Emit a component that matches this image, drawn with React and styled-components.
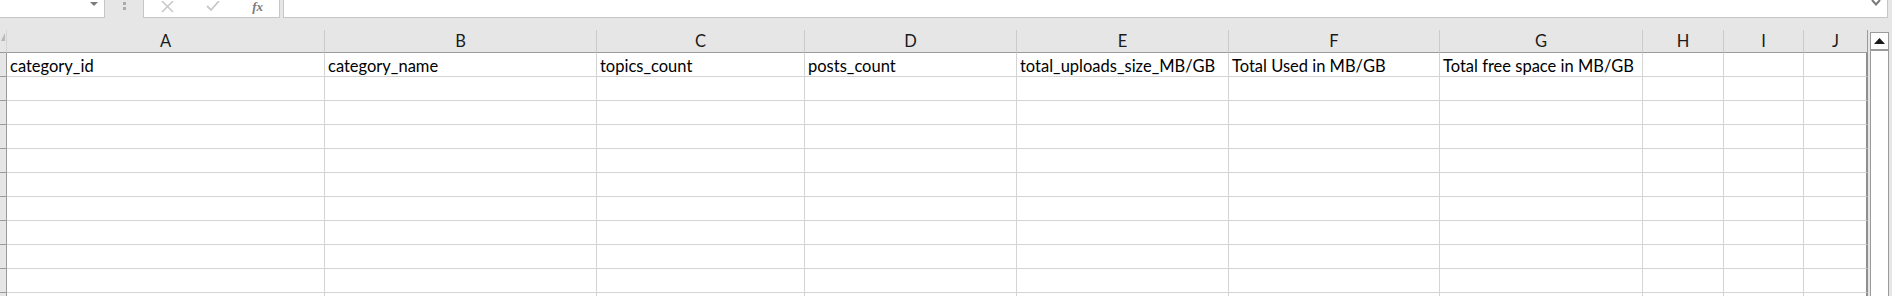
import React from "react";
import styled, { createGlobalStyle } from "styled-components";

const columns = [
  { name: "A", width: 318, title: "category_id" },
  { name: "B", width: 272, title: "category_name" },
  { name: "C", width: 208, title: "topics_count" },
  { name: "D", width: 212, title: "posts_count" },
  { name: "E", width: 212, title: "total_uploads_size_MB/GB" },
  { name: "F", width: 211, title: "Total Used in MB/GB" },
  { name: "G", width: 203, title: "Total free space in MB/GB" },
  { name: "H", width: 81, title: "" },
  { name: "I", width: 80, title: "" },
  { name: "J", width: 64, title: "" },
];

const emptyRows = 10;

function App() {
  const template = `7px ${columns.map((c) => c.width + "px").join(" ")}`;
  return (
    <>
      <GlobalStyle />
      <Window>
        <FormulaBar>
          <NameBox>
            <Caret />
          </NameBox>
          <Grip>
            <Dot />
            <Dot />
          </Grip>
          <ButtonBox>
            <svg width="13" height="12" viewBox="0 0 13 12">
              <path d="M1 0 L12 11 M12 0 L1 11" stroke="#c9c9c9" strokeWidth="1.6" fill="none" />
            </svg>
            <svg width="14" height="11" viewBox="0 0 14 11">
              <path d="M1 5 L5 9 L13 0" stroke="#c9c9c9" strokeWidth="1.8" fill="none" />
            </svg>
            <Fx>fx</Fx>
          </ButtonBox>
          <FormulaInput>
            <svg width="10" height="7" viewBox="0 0 10 7">
              <path d="M1 0 L5 4.5 L9 0" stroke="#7a7a7a" strokeWidth="2" fill="none" />
            </svg>
          </FormulaInput>
        </FormulaBar>
        <SheetArea>
          <Grid style={{ gridTemplateColumns: template }}>
            <Corner>
              <CornerTri />
            </Corner>
            {columns.map((c, i) => (
              <ColHeader key={c.name} $last={i === columns.length - 1}>
                {c.name}
              </ColHeader>
            ))}
            <RowHeader />
            {columns.map((c, i) => (
              <Cell key={c.name} $last={i === columns.length - 1}>
                {c.title}
              </Cell>
            ))}
            {Array.from({ length: emptyRows }).map((_, r) => (
              <React.Fragment key={r}>
                <RowHeader />
                {columns.map((c, i) => (
                  <Cell key={c.name} $last={i === columns.length - 1} />
                ))}
              </React.Fragment>
            ))}
          </Grid>
          <ScrollTrack>
            <ScrollBox>
              <UpButton>
                <svg width="11" height="6" viewBox="0 0 11 6">
                  <path d="M0 6 L5.5 0 L11 6 Z" fill="#1a1a1a" />
                </svg>
              </UpButton>
            </ScrollBox>
          </ScrollTrack>
        </SheetArea>
      </Window>
    </>
  );
}

export default App;

const GlobalStyle = createGlobalStyle`
  html, body {
    margin: 0;
    padding: 0;
    background: #e6e6e6;
    overflow: hidden;
  }
`;

const Window = styled.div`
  width: 1892px;
  height: 296px;
  background: #e6e6e6;
  font-family: Lato, "Open Sans", "Liberation Sans", sans-serif;
  overflow: hidden;
`;

const FormulaBar = styled.div`
  display: flex;
  height: 18px;
  align-items: stretch;
  margin-bottom: 12px;
`;

const NameBox = styled.div`
  position: relative;
  width: 105px;
  background: #fff;
  border-right: 1px solid #c6c6c6;
  border-bottom: 1px solid #c6c6c6;
  box-sizing: border-box;
`;

const Caret = styled.div`
  position: absolute;
  left: 90px;
  top: 2px;
  width: 0;
  height: 0;
  border-left: 4px solid transparent;
  border-right: 4px solid transparent;
  border-top: 4px solid #7a7a7a;
`;

const Grip = styled.div`
  width: 38px;
  display: flex;
  flex-direction: column;
  align-items: center;
  gap: 2px;
  padding-top: 2px;
  box-sizing: border-box;
`;

const Dot = styled.span`
  width: 3px;
  height: 3px;
  background: #ababab;
`;

const ButtonBox = styled.div`
  width: 137px;
  display: flex;
  align-items: flex-start;
  padding: 0 16px 0 17px;
  justify-content: space-between;
  background: #fff;
  border: 1px solid #c6c6c6;
  border-top: none;
  box-sizing: border-box;
  svg {
    margin-top: 1px;
  }
`;

const Fx = styled.span`
  font-family: "Liberation Serif", serif;
  font-style: italic;
  font-weight: bold;
  font-size: 13px;
  line-height: 13px;
  color: #7a7a7a;
`;

const FormulaInput = styled.div`
  margin-left: 3px;
  width: 1605px;
  display: flex;
  justify-content: flex-end;
  padding-right: 6px;
  background: #fff;
  border: 1px solid #c6c6c6;
  border-top: none;
  box-sizing: border-box;
`;

const SheetArea = styled.div`
  display: flex;
  align-items: flex-start;
`;

const Grid = styled.div`
  display: grid;
  grid-auto-rows: 24px;
  grid-template-rows: 23px;
`;

const Corner = styled.div`
  position: relative;
  background: #e6e6e6;
  border-right: 1px solid #d4d4d4;
  border-bottom: 1px solid #9b9b9b;
`;

const CornerTri = styled.div`
  position: absolute;
  right: 1px;
  top: 3px;
  width: 0;
  height: 0;
  border-left: 4px solid transparent;
  border-bottom: 8px solid #b8b8b8;
`;

const ColHeader = styled.div`
  background: #e6e6e6;
  border-right: 1px solid ${(p) => (p.$last ? "#9b9b9b" : "#cbcbcb")};
  border-bottom: 1px solid #9b9b9b;
  text-align: center;
  font-size: 16.5px;
  line-height: 22px;
  color: #1b1b1b;
`;

const RowHeader = styled.div`
  background: #e6e6e6;
  border-right: 1px solid #9b9b9b;
  border-bottom: 1px solid #9b9b9b;
`;

const Cell = styled.div`
  background: #fff;
  border-right: ${(p) => (p.$last ? "2px solid #8f8f8f" : "1px solid #d4d4d4")};
  border-bottom: 1px solid #d4d4d4;
  padding: 3px 0 0 3px;
  box-sizing: border-box;
  font-size: 16.5px;
  line-height: 21px;
  color: #000;
  white-space: nowrap;
  overflow: hidden;
`;

const ScrollTrack = styled.div`
  padding-left: 2px;
  align-self: stretch;
  height: 296px;
`;

const ScrollBox = styled.div`
  width: 19px;
  height: 290px;
  margin-top: 2px;
  background: #fff;
  border: 1px solid #9b9b9b;
  box-sizing: border-box;
`;

const UpButton = styled.div`
  height: 16px;
  border-bottom: 2px solid #9b9b9b;
  display: flex;
  align-items: center;
  justify-content: center;
`;
